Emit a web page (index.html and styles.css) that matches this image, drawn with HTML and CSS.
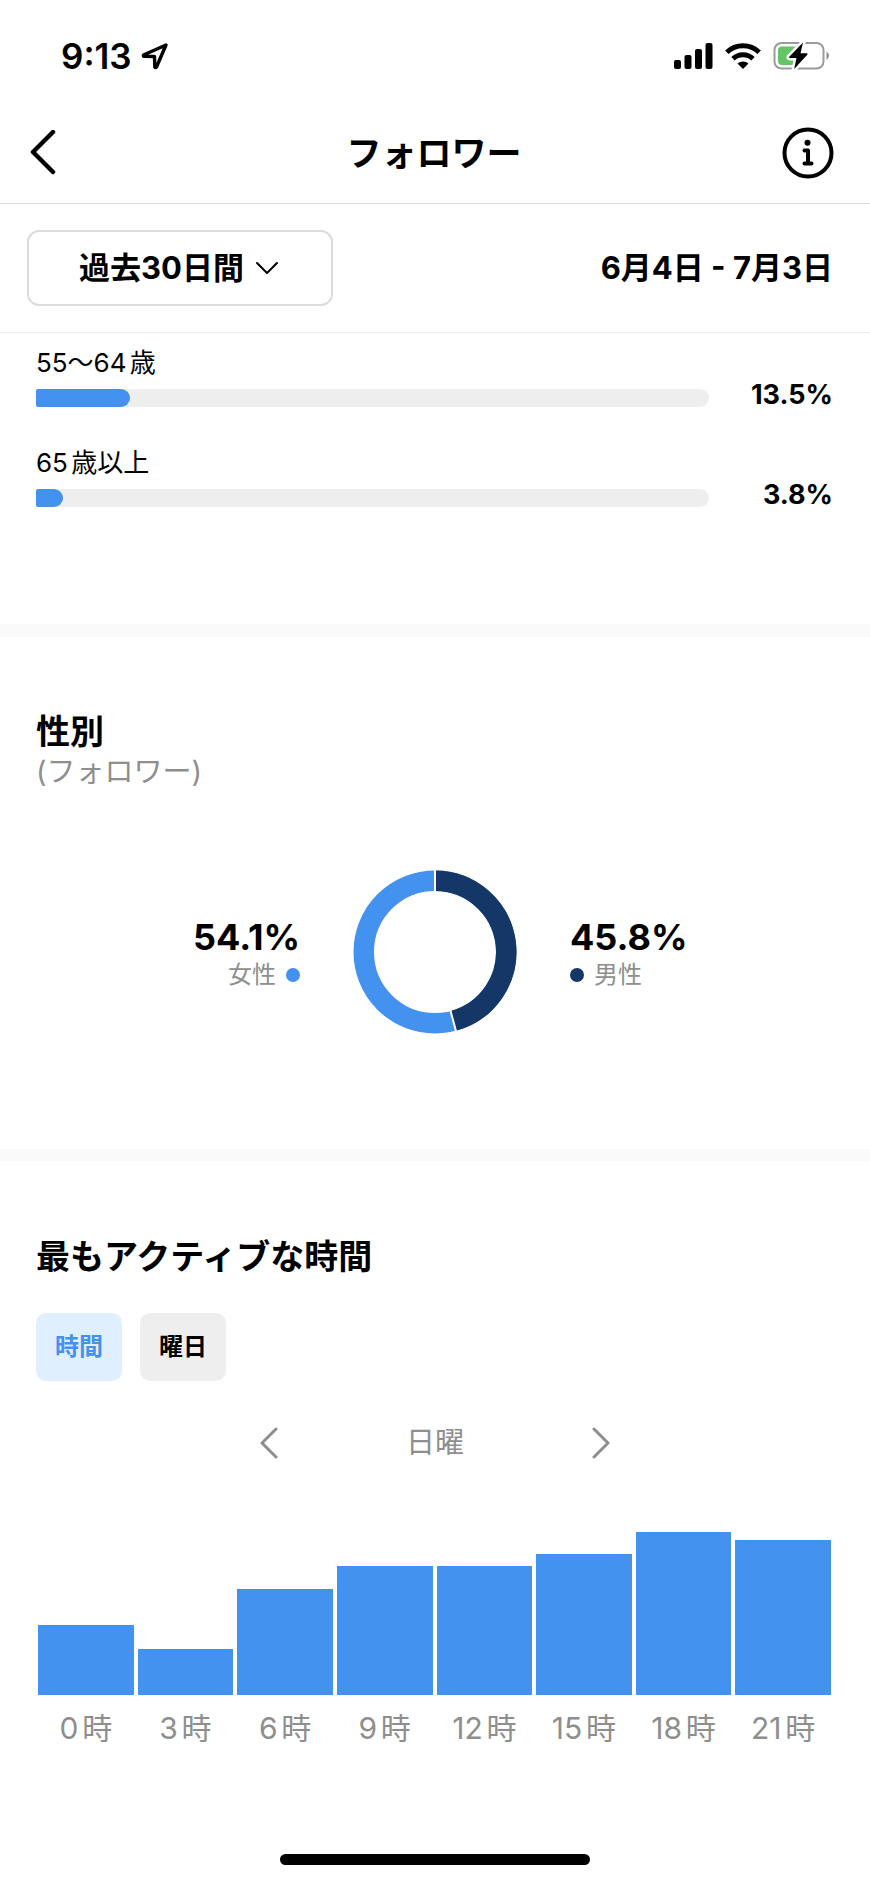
FILE: index.html
```html
<!DOCTYPE html>
<html lang="ja">
<head>
    <meta charset="UTF-8">
    <meta name="viewport" content="width=device-width, initial-scale=1.0">
    <title>フォロワー</title>
    <link rel="stylesheet" href="styles.css">
</head>
<body>
    <div class="status-bar">
        <div class="status-left">
            <span class="clock">9:13</span>
            <svg class="icon" width="28" height="28" viewBox="0 0 28 28" fill="none" stroke="#000" stroke-width="3.400" stroke-linejoin="round">
                <path d="M25 3 L2.500 13 Q2 14 3 14.300 L13.500 14.500 L13.800 25 Q14.500 26.300 15.500 25 Z"/>
            </svg>
        </div>
        <div class="status-right">
            <svg class="icon" width="39" height="27" viewBox="0 0 39 27">
                <rect x="0" y="17" width="7" height="9" rx="2"/>
                <rect x="10.500" y="12" width="7" height="14" rx="2"/>
                <rect x="21" y="6" width="7" height="20" rx="2"/>
                <rect x="31.500" y="0" width="7" height="26" rx="2"/>
            </svg>
            <svg class="icon" width="36" height="28" viewBox="0 0 36 28" fill="none" stroke="#000" stroke-width="5">
                <path d="M1.800 10.200 A23.500 23.500 0 0 1 34.200 10.200"/>
                <path d="M8 16.800 A14.500 14.500 0 0 1 28 16.800"/>
                <path d="M12.500 21.600 A8 8 0 0 1 23.500 21.600 L18 27 Z" fill="#000" stroke="none"/>
            </svg>
            <svg class="icon" width="57" height="30" viewBox="0 0 57 30">
                <rect x="1.500" y="2" width="49" height="25.500" rx="7" fill="#fff" stroke="#9b9b9b" stroke-width="2"/>
                <rect x="5" y="5.500" width="20" height="18.500" rx="4" fill="#65c466"/>
                <path d="M53.500 10.500 Q56 12.500 56 14.750 T53.500 19 Z" fill="#8e8e8e"/>
                <path d="M30 1.500 L16 16 Q15.800 17 17 17 L23.500 17 L21.200 28 L34.500 13.500 Q34.800 12.300 33.500 12.300 L27.500 12.300 Z" stroke="#fff" stroke-width="5"/>
                <path d="M30 1.500 L16 16 Q15.800 17 17 17 L23.500 17 L21.200 28 L34.500 13.500 Q34.800 12.300 33.500 12.300 L27.500 12.300 Z"/>
            </svg>
        </div>
    </div>

    <header class="header">
        <button class="icon-button" aria-label="戻る">
            <svg class="icon" width="26" height="46" viewBox="0 0 26 46" fill="none" stroke="#000" stroke-width="4.500" stroke-linecap="round" stroke-linejoin="round">
                <path d="M23 2 L3 22 L23 42"/>
            </svg>
        </button>
        <h1>フォロワー</h1>
        <button class="icon-button" aria-label="情報">
            <svg class="icon" width="52" height="52" viewBox="0 0 52 52" fill="none" stroke="#000" stroke-width="4" stroke-linecap="round" stroke-linejoin="round">
                <circle cx="26" cy="26" r="23.500"/>
                <circle cx="25.500" cy="15.700" r="3" fill="#000" stroke="none"/>
                <path d="M22.500 23.500 L26 23.500 L26 36.500 M22.500 36.500 L29.500 36.500"/>
            </svg>
        </button>
    </header>

    <div class="filter">
        <div class="period">
            <select aria-label="期間">
                <option>過去30日間</option>
                <option>過去7日間</option>
            </select>
            <svg class="period-arrow" width="24" height="14" viewBox="0 0 24 14" fill="none" stroke="#000" stroke-width="2" stroke-linecap="round" stroke-linejoin="round">
                <path d="M2 2 L12 12 L22 2"/>
            </svg>
        </div>
        <p class="date-range">6月4日 - 7月3日</p>
    </div>

    <main>
        <section class="ages">
            <div class="age-row">
                <div class="age-graph">
                    <p>55〜64歳</p>
                    <div class="track"><div class="fill" style="width: 14%"></div></div>
                </div>
                <span class="age-value">13.5%</span>
            </div>
            <div class="age-row">
                <div class="age-graph">
                    <p>65歳以上</p>
                    <div class="track"><div class="fill" style="width: 4%"></div></div>
                </div>
                <span class="age-value">3.8%</span>
            </div>
        </section>

        <section class="gender">
            <h2>性別</h2>
            <p class="subtitle">(フォロワー)</p>
            <div class="gender-chart">
                <div class="gender-item female">
                    <strong>54.1%</strong>
                    <span class="legend">女性<i class="dot"></i></span>
                </div>
                <svg class="icon" width="164" height="164" viewBox="0 0 164 164" fill="none" stroke-width="20.500">
                    <circle cx="82" cy="82" r="71.250" stroke="#4392ef"/>
                    <path d="M82 10.750 A71.250 71.250 0 0 1 100.500 150.800" stroke="#153767"/>
                    <path d="M82 0 V23 M97 139 L103.500 163" stroke="#fff" stroke-width="2"/>
                </svg>
                <div class="gender-item male">
                    <strong>45.8%</strong>
                    <span class="legend"><i class="dot"></i>男性</span>
                </div>
            </div>
        </section>

        <section class="active-time">
            <h2>最もアクティブな時間</h2>
            <div class="tabs">
                <button class="tab selected">時間</button>
                <button class="tab">曜日</button>
            </div>
            <div class="day-nav">
                <button class="icon-button" aria-label="前の曜日">
                    <svg class="icon" width="18" height="32" viewBox="0 0 18 32" fill="none" stroke="#8e8e8e" stroke-width="3" stroke-linecap="round" stroke-linejoin="round">
                        <path d="M16 2 L2 16 L16 30"/>
                    </svg>
                </button>
                <span>日曜</span>
                <button class="icon-button" aria-label="次の曜日">
                    <svg class="icon" width="18" height="32" viewBox="0 0 18 32" fill="none" stroke="#8e8e8e" stroke-width="3" stroke-linecap="round" stroke-linejoin="round">
                        <path d="M2 2 L16 16 L2 30"/>
                    </svg>
                </button>
            </div>
            <div class="chart">
                <div class="column"><div class="bar" style="height: 70px"></div><span>0時</span></div>
                <div class="column"><div class="bar" style="height: 46px"></div><span>3時</span></div>
                <div class="column"><div class="bar" style="height: 106px"></div><span>6時</span></div>
                <div class="column"><div class="bar" style="height: 129px"></div><span>9時</span></div>
                <div class="column"><div class="bar" style="height: 129px"></div><span>12時</span></div>
                <div class="column"><div class="bar" style="height: 141px"></div><span>15時</span></div>
                <div class="column"><div class="bar" style="height: 163px"></div><span>18時</span></div>
                <div class="column"><div class="bar" style="height: 155px"></div><span>21時</span></div>
            </div>
        </section>
    </main>

    <div class="home-indicator"></div>
</body>
</html>
```
FILE: styles.css
```css
* {
    margin: 0;
    padding: 0;
    box-sizing: border-box;
}

body {
    font-family: Inter, "Noto Sans CJK JP", sans-serif;
    font-size: 29px;
    line-height: 40px;
    background: #fff;
    color: #000;
    text-autospace: normal;
}

button,
select {
    font: inherit;
    color: inherit;
    border: none;
    background: none;
    cursor: pointer;
}

.icon {
    display: block;
}

/* status bar */
.status-bar {
    display: flex;
    justify-content: space-between;
    align-items: center;
    height: 112px;
    padding: 0 40px 0 61px;
}

.status-left {
    display: flex;
    align-items: center;
    gap: 9px;
}

.clock {
    font-size: 35px;
    font-weight: 600;
}

.status-right {
    display: flex;
    align-items: center;
    gap: 12px;
}

/* header */
.header {
    display: flex;
    justify-content: space-between;
    align-items: center;
    height: 92px;
    padding: 0 36px 10px 30px;
    border-bottom: 1px solid #dbdbdb;
}

.header h1 {
    padding-left: 30px;
    font-size: 35px;
    font-weight: 700;
}

/* period filter */
.filter {
    display: flex;
    justify-content: space-between;
    align-items: center;
    height: 129px;
    padding: 0 37px 0 27px;
    border-bottom: 1px solid #ececec;
    font-size: 31px;
    font-weight: 700;
    text-autospace: no-autospace;
}

.period {
    position: relative;
}

.period select {
    appearance: none;
    width: 306px;
    height: 76px;
    padding: 0 50px;
    border: 2px solid #dbdbdb;
    border-radius: 12px;
}

.period-arrow {
    position: absolute;
    top: 31px;
    right: 54px;
    pointer-events: none;
}

/* age ranges */
.ages {
    display: grid;
    gap: 36px;
    padding: 10px 37px 117px 36px;
    font-size: 26px;
}

.age-row {
    display: flex;
    align-items: flex-end;
    justify-content: space-between;
}

.age-graph {
    flex: 0 0 84.5%;
}

.age-graph p {
    margin-bottom: 6px;
}

.track {
    height: 18px;
    border-radius: 2px 9px 9px 2px;
    background: #eee;
}

.fill {
    height: 100%;
    border-radius: 2px 9px 9px 2px;
    background: #4392ef;
}

.age-value {
    font-size: 27px;
    font-weight: 700;
    line-height: 24px;
}

/* gender */
h2 {
    font-size: 34px;
    font-weight: 700;
}

.gender,
.active-time {
    padding: 75px 36px 0;
    border-top: 13px solid #fafafa;
}

.subtitle {
    color: #8e8e8e;
}

.gender-chart {
    display: grid;
    grid-template-columns: 1fr auto 1fr;
    gap: 53px;
    align-items: center;
    padding: 78px 0 115px;
}

.gender-item {
    display: flex;
    flex-direction: column;
    padding-top: 6px;
}

.gender-item strong {
    font-size: 36px;
    font-weight: 700;
}

.female {
    align-items: flex-end;
}

.legend {
    display: flex;
    align-items: center;
    gap: 10px;
    font-size: 24px;
    line-height: 36px;
    color: #8e8e8e;
}

.dot {
    width: 14px;
    height: 14px;
    border-radius: 50%;
    background: #4392ef;
}

.male .dot {
    background: #153767;
}

/* most active times */
.tabs {
    display: flex;
    gap: 18px;
    margin-top: 36px;
}

.tab {
    padding: 14px 19px;
    border-radius: 10px;
    background: #eee;
    font-size: 24px;
    font-weight: 700;
}

.tab.selected {
    background: #e0effe;
    color: #4392ef;
}

.day-nav {
    display: flex;
    justify-content: center;
    align-items: center;
    gap: 128px;
    margin-top: 42px;
    color: #8e8e8e;
}

.chart {
    display: grid;
    grid-template-columns: repeat(8, 1fr);
    gap: 4px;
    align-items: end;
    margin-top: 69px;
    padding: 0 3px 0 2px;
}

.bar {
    background: #4392ef;
}

.column span {
    display: block;
    margin-top: 13px;
    font-size: 30px;
    text-align: center;
    color: #8e8e8e;
}

.home-indicator {
    width: 310px;
    height: 11px;
    margin: 106px auto 18px;
    border-radius: 6px;
    background: #000;
}
```
